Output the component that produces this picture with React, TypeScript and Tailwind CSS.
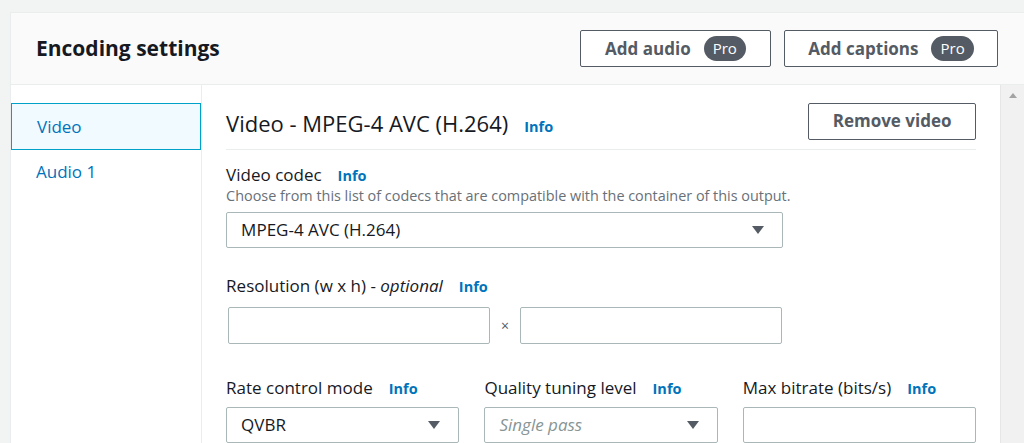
const Info = () => (
  <span className="ml-[16px] text-[14.5px] font-bold text-[#0073bb]">Info</span>
);

const Caret = () => (
  <svg width="14" height="10" viewBox="0 0 14 10" className="shrink-0">
    <path d="M1 1h12L7 9z" fill="#545b64" />
  </svg>
);

const Select = ({ value, placeholder, w }: { value?: string; placeholder?: string; w: string }) => (
  <div className={`${w} h-[36px] border border-[#aab7b8] rounded-[2px] flex items-center justify-between pl-[14px] pr-[17px] bg-white`}>
    {value ? (
      <span className="text-[17px] text-[#16191f]">{value}</span>
    ) : (
      <span className="text-[17px] italic text-[#879596]">{placeholder}</span>
    )}
    <Caret />
  </div>
);

const Pro = () => (
  <span className="ml-[13px] rounded-full bg-[#545b64] text-white text-[15px] font-normal px-[9px] h-[25px] leading-[25px]">Pro</span>
);

const Label = ({ children }: { children: React.ReactNode }) => (
  <div className="flex items-baseline h-[22px] leading-[22px]">
    <span className="text-[17px] text-[#16191f]">{children}</span>
    <Info />
  </div>
);

export default function App() {
  return (
    <div className="h-[443px] w-[1024px] overflow-hidden bg-[#f2f3f3] pt-[12px] pl-[10px] font-['Open_Sans',sans-serif]">
      <div className="bg-white border-l border-t border-[#eaeded] h-full flex flex-col">
        <div className="h-[74px] bg-[#fafafa] border-b border-[#eaeded] flex items-center justify-between pl-[25px] pr-[26px]">
          <h1 className="text-[21px] font-bold text-[#16191f]">Encoding settings</h1>
          <div className="flex gap-[13px]">
            <button className="w-[191px] h-[37px] border border-[#545b64] rounded-[2px] bg-white flex items-center justify-center text-[17px] font-bold text-[#545b64]">
              Add audio<Pro />
            </button>
            <button className="w-[214px] h-[37px] border border-[#545b64] rounded-[2px] bg-white flex items-center justify-center text-[17px] font-bold text-[#545b64]">
              Add captions<Pro />
            </button>
          </div>
        </div>
        <div className="flex flex-1">
          <div className="w-[192px] border-r border-[#eaeded] pt-[18px]">
            <div className="h-[47px] bg-[#f1faff] border border-[#00a1c9] flex items-center pl-[25px] text-[17px] text-[#0073bb]">Video</div>
            <div className="h-[44px] flex items-center pl-[25px] text-[17px] text-[#0073bb]">Audio 1</div>
          </div>
          <div className="w-[798px] pl-[24px] pr-[24px] pt-[18px]">
            <div className="flex items-center justify-between h-[36px]">
              <div className="flex items-baseline pt-[4px]">
                <h2 className="text-[22px] text-[#16191f]">Video - MPEG-4 AVC (H.264)</h2>
                <Info />
              </div>
              <button className="w-[168px] h-[37px] border border-[#545b64] rounded-[2px] bg-white text-[17px] font-bold text-[#545b64]">Remove video</button>
            </div>
            <div className="mt-[10px] border-t border-[#eaeded]" />
            <div className="mt-[14px]">
              <Label>Video codec</Label>
            </div>
            <div className="text-[14.4px] text-[#687078] leading-[20px]">Choose from this list of codecs that are compatible with the container of this output.</div>
            <div className="mt-[6px]">
              <Select value="MPEG-4 AVC (H.264)" w="w-[557px]" />
            </div>
            <div className="mt-[27px]">
              <Label>Resolution (w x h) - <i>optional</i></Label>
            </div>
            <div className="mt-[10px] flex items-center">
              <div className="ml-[2px] w-[262px] h-[37px] border border-[#aab7b8] rounded-[2px]" />
              <span className="w-[30px] text-center text-[14px] text-[#545b64]">×</span>
              <div className="w-[262px] h-[37px] border border-[#aab7b8] rounded-[2px]" />
            </div>
            <div className="mt-[33px] grid grid-cols-3 gap-x-[25px] w-[750px]">
              {[
                { l: "Rate control mode", s: <Select value="QVBR" w="w-full" /> },
                { l: "Quality tuning level", s: <Select placeholder="Single pass" w="w-full" /> },
                { l: "Max bitrate (bits/s)", s: <div className="w-full h-[36px] border border-[#aab7b8] rounded-[2px]" /> },
              ].map((c) => (
                <div key={c.l}>
                  <Label>{c.l}</Label>
                  <div className="mt-[8px]">{c.s}</div>
                </div>
              ))}
            </div>
          </div>
          <div className="w-[24px] bg-[#f1f1f1] border-l border-[#e6e6e6] flex justify-center pt-[8px]">
            <svg width="8" height="5" viewBox="0 0 8 5"><path d="M0 5L4 0L8 5z" fill="#a3a3a3" /></svg>
          </div>
        </div>
      </div>
    </div>
  );
}
